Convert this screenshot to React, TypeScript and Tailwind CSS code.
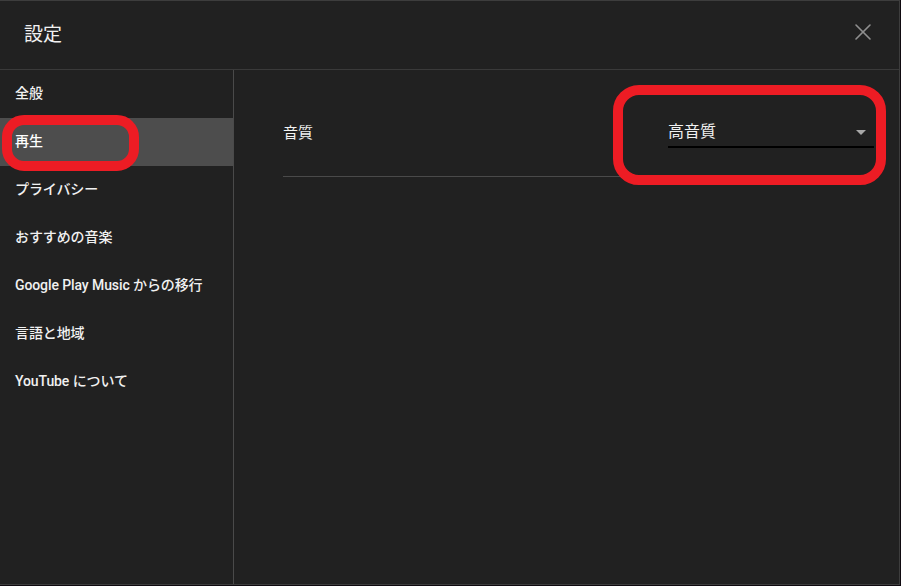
import { X } from 'lucide-react';

const NAV = [
  '全般',
  '再生',
  'プライバシー',
  'おすすめの音楽',
  'Google Play Music からの移行',
  '言語と地域',
  'YouTube について',
];

export default function App() {
  return (
    <div className="relative w-[901px] h-[586px] bg-[#0f0a10] font-['Roboto','Noto_Sans_CJK_JP',sans-serif] text-white">
      <div className="flex flex-col w-[900px] h-[585px] bg-[#212121] border-t border-r border-b border-[#3d3d3d]">
        {/* Header */}
        <div className="flex items-center justify-between h-[69px] border-b border-[#3a3a3a] pl-[24px] pr-[22px] shrink-0">
          <h2 className="mb-[2px] text-[19px] leading-none text-[#f1f1f1]">設定</h2>
          <X className="mb-[6px] w-[28px] h-[28px] text-[#8f8f8f]" strokeWidth={1.4} />
        </div>

        <div className="flex flex-1 min-h-0">
          {/* Sidebar */}
          <nav className="w-[234px] border-r border-[#4a4a4a] shrink-0">
            {NAV.map((item) => (
              <div
                key={item}
                className={`flex items-center h-[48px] pl-[15px] pb-[1px] text-[14px] font-medium tracking-[-0.1px] ${
                  item === '再生' ? 'bg-[#4d4d4d] text-white' : 'text-[#f1f1f1]'
                }`}
              >
                {item}
              </div>
            ))}
          </nav>

          {/* Content */}
          <div className="flex-1 pt-[20px] pl-[49px] pr-[25px]">
            <div className="flex items-center justify-between h-[87px] border-b border-[#4a4a4a]">
              <span className="mt-[1px] text-[15px] text-[#f1f1f1]">音質</span>
              <div className="flex items-center justify-between w-[206px] h-[30px] border-b-2 border-black">
                <span className="text-[16px] text-[#f1f1f1]">高音質</span>
                <span className="mr-[8px] w-0 h-0 border-l-[5px] border-r-[5px] border-t-[5px] border-l-transparent border-r-transparent border-t-[#a8a8a8]" />
              </div>
            </div>
          </div>
        </div>
      </div>

      {/* Annotation rings */}
      <div className="absolute left-[2px] top-[115px] w-[137px] h-[56px] rounded-[22px] border-[10px] border-[#ed1c24]" />
      <div className="absolute left-[613px] top-[85px] w-[273px] h-[100px] rounded-[26px] border-[10px] border-[#ed1c24]" />
    </div>
  );
}
